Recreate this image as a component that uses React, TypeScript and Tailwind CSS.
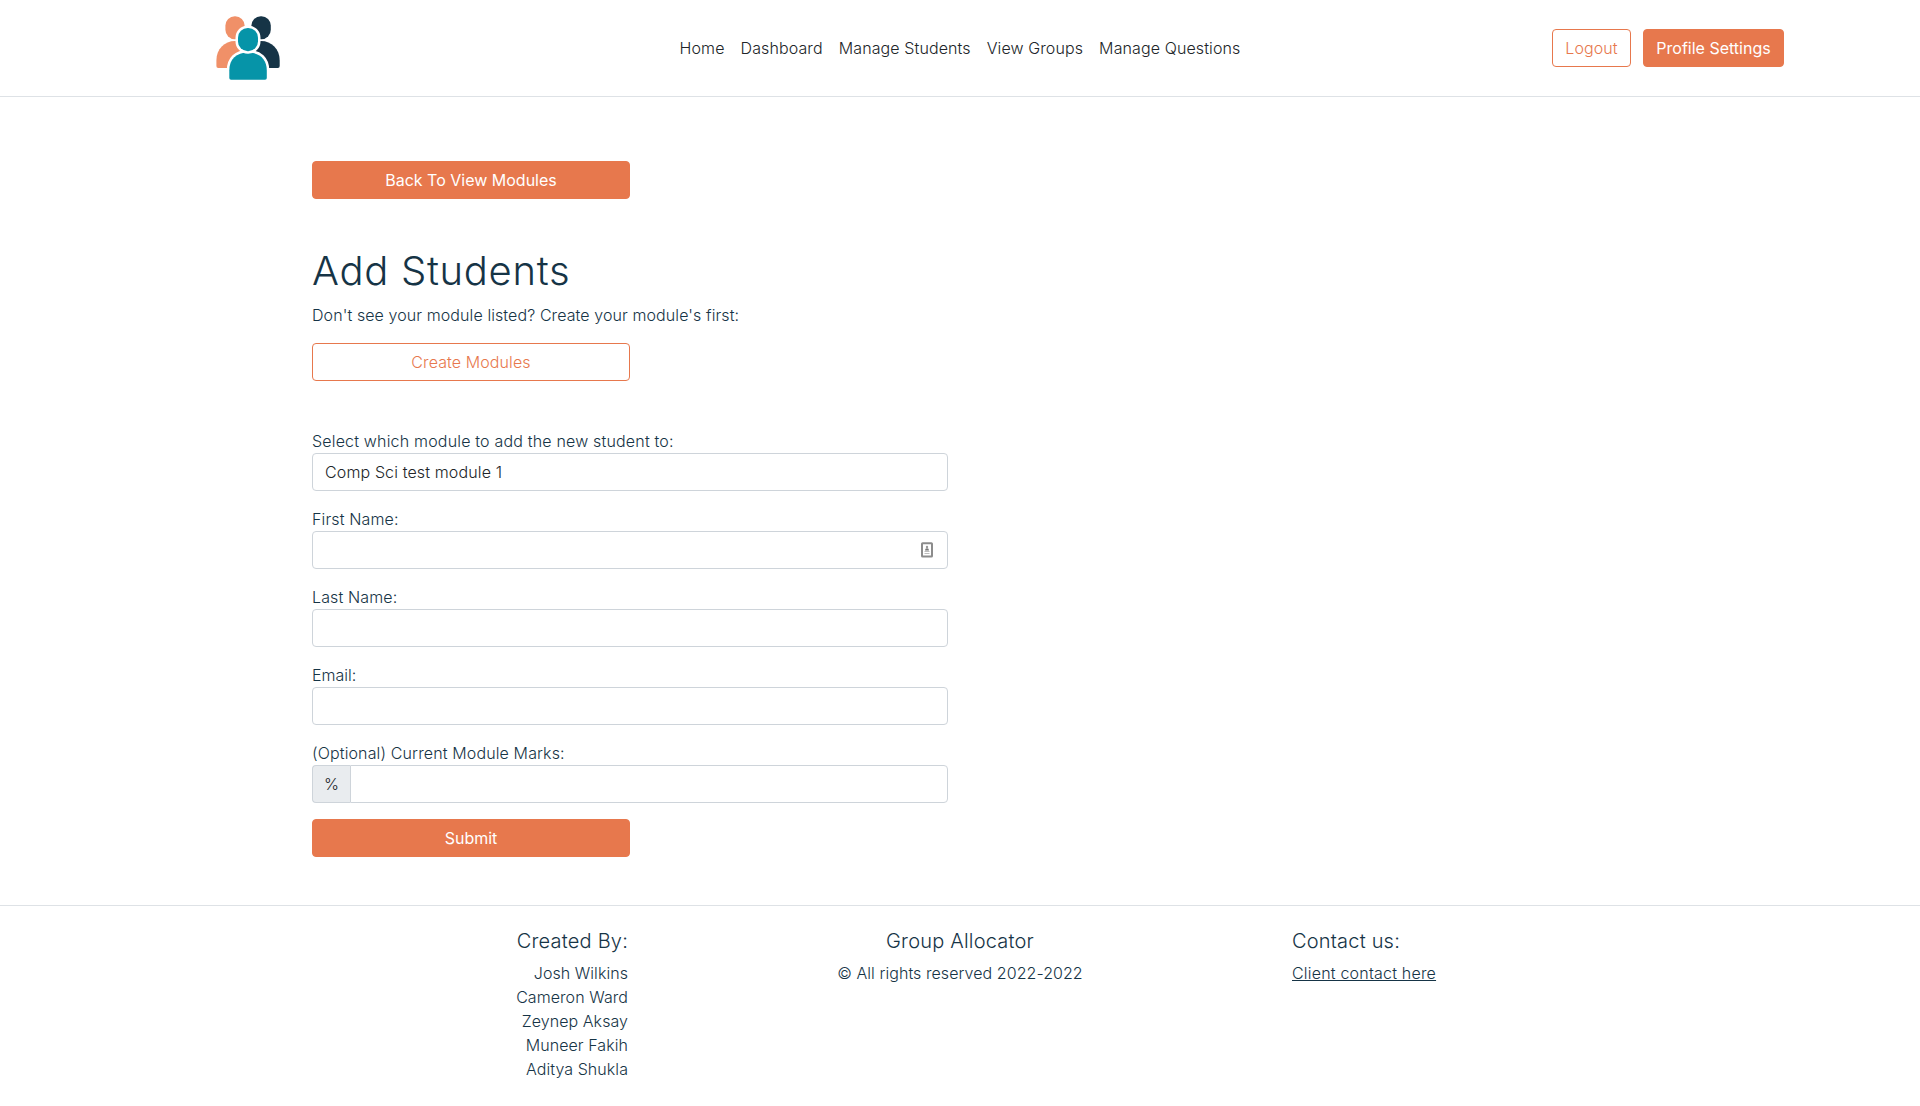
import React from "react";

const navLinks = ["Home", "Dashboard", "Manage Students", "View Groups", "Manage Questions"];
const authors = ["Josh Wilkins", "Cameron Ward", "Zeynep Aksay", "Muneer Fakih", "Aditya Shukla"];

const solidButton =
  "flex h-[38px] items-center justify-center rounded border border-[#e7784d] bg-[#e7784d] font-normal text-white";
const outlineButton =
  "flex h-[38px] items-center justify-center rounded border border-[#e7784d] tracking-[0.1px] text-[#e7784d]";
const control =
  "h-[38px] w-full rounded border border-[#ced4da] bg-white px-3 tracking-[0.13px] text-[#212529] outline-none";
const footerHeading = "mb-2 text-xl leading-6 tracking-[0.2px]";

function Logo() {
  return (
    <svg width="64" height="64" viewBox="0 0 64 64" className="ml-4">
      <g fill="#f09068">
        <rect x="9.4" y="0.2" width="19.2" height="23" rx="9.4" />
        <path d="M0.4 50V44.5C0.4 33 8.5 25 19 25S38 33 38 44.5V51.9H2.2Q0.4 51.9 0.4 50Z" />
      </g>
      <g fill="#163446">
        <rect x="35.4" y="0.2" width="19.4" height="23" rx="9.4" />
        <path d="M26 51.9V44.5C26 33 34.5 25 45 25S63.7 33 63.7 44.5V50Q63.7 51.9 61.9 51.9Z" />
      </g>
      <g fill="#0694a8" stroke="#fff" strokeWidth="5" paintOrder="stroke">
        <path d="M13.3 62V54.5C13.3 43 20.5 36.5 32 36.5S50.8 43 50.8 54.5V62Q50.8 63.8 49 63.8H15.1Q13.3 63.8 13.3 62Z" />
        <rect x="22" y="12" width="20" height="23.2" rx="9.8" />
      </g>
    </svg>
  );
}

function ContactIcon() {
  return (
    <svg width="12" height="16" viewBox="0 0 12 16" className="absolute right-[15px] top-[11px]">
      <rect x="1" y="1.2" width="10" height="13.4" rx="0.6" fill="#fff" stroke="#8c8c8c" strokeWidth="2" />
      <circle cx="6" cy="5" r="1.2" fill="#999" />
      <path d="M4 8.4Q4 6.2 6 6.2T8 8.4Z" fill="#777" />
      <path d="M3.5 9.5H8.5M3.5 11.5H8.5" stroke="#bdbdbd" />
    </svg>
  );
}

function Field({
  label,
  labelClass = "tracking-[0.13px]",
  children,
}: {
  label: string;
  labelClass?: string;
  children: React.ReactNode;
}) {
  return (
    <label className="mb-4 block">
      <span className={`block ${labelClass}`}>{label}</span>
      {children}
    </label>
  );
}

export default function App() {
  return (
    <div className="min-h-[1106px] bg-white font-['Inter',sans-serif] text-base leading-6 font-light text-[#163446]">
      <header className="grid h-[97px] grid-cols-[1fr_auto_1fr] items-center border-b border-[#dee2e6]">
        <div className="pl-[200px]">
          <Logo />
        </div>
        <nav className="flex tracking-[0.11px] text-[#212529]">
          {navLinks.map((link) => (
            <a key={link} href="#" className="px-2">
              {link}
            </a>
          ))}
        </nav>
        <div className="flex justify-end gap-3 pr-[136px]">
          <button className={`${outlineButton} w-[79px]`}>Logout</button>
          <button className={`${solidButton} w-[141px]`}>Profile Settings</button>
        </div>
      </header>

      <main className="mx-auto w-[1296px] pt-16 pb-12">
        <div className="w-[636px]">
          <button className={`${solidButton} w-1/2`}>Back To View Modules</button>
          <h1 className="mt-12 mb-2 text-[40px] leading-[48px] tracking-[0.7px]">Add Students</h1>
          <p className="mb-4 tracking-[0.09px]">Don't see your module listed? Create your module's first:</p>
          <button className={`${outlineButton} w-1/2`}>Create Modules</button>

          <form className="mt-12">
            <Field label="Select which module to add the new student to:" labelClass="tracking-[0.18px]">
              <select className={`${control} block appearance-none`}>
                <option>Comp Sci test module 1</option>
              </select>
            </Field>
            <Field label="First Name:">
              <span className="relative block">
                <input className={`${control} block`} />
                <ContactIcon />
              </span>
            </Field>
            <Field label="Last Name:">
              <input className={`${control} block`} />
            </Field>
            <Field label="Email:" labelClass="tracking-normal">
              <input className={`${control} block`} />
            </Field>
            <Field label="(Optional) Current Module Marks:">
              <span className="flex">
                <span className="flex h-[38px] w-[38px] items-center justify-center rounded-l border border-r-0 border-[#ced4da] bg-[#e9ecef] text-[#212529]">
                  %
                </span>
                <input className={`${control} min-w-0 flex-1 rounded-l-none`} />
              </span>
            </Field>
            <button type="button" className={`${solidButton} w-1/2`}>
              Submit
            </button>
          </form>
        </div>
      </main>

      <footer className="grid grid-cols-3 border-t border-[#dee2e6] pt-[23px]">
        <div className="px-3 text-right">
          <h5 className={footerHeading}>Created By:</h5>
          {authors.map((name) => (
            <p key={name} className="tracking-[0.06px]">
              {name}
            </p>
          ))}
        </div>
        <div className="px-3 text-center">
          <h5 className={footerHeading}>Group Allocator</h5>
          <p className="tracking-[0.06px]">© All rights reserved 2022-2022</p>
        </div>
        <div className="px-3">
          <h5 className={footerHeading}>Contact us:</h5>
          <a href="#" className="tracking-[0.2px] underline">
            Client contact here
          </a>
        </div>
      </footer>
    </div>
  );
}
